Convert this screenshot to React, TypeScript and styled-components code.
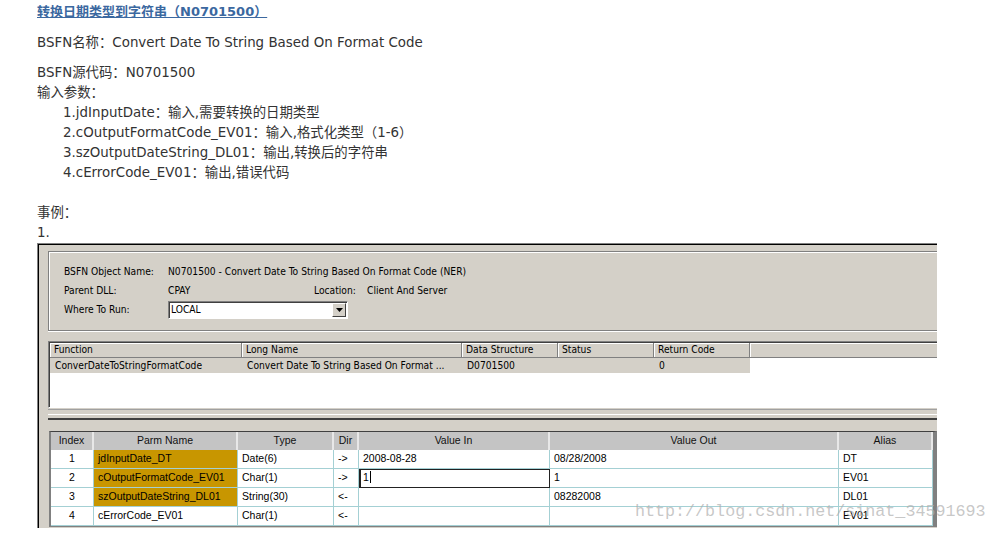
import React from "react";
import styled, { createGlobalStyle } from "styled-components";

const GlobalStyle = createGlobalStyle`
  html, body { margin: 0; padding: 0; background: #fff; }
  body { width: 995px; height: 540px; overflow: hidden; }
`;

const Page = styled.div`
  position: relative;
  padding: 2px 0 0 37px;
  font-family: "DejaVu Sans", "Noto Sans CJK SC", sans-serif;
  font-size: 13.4px;
  line-height: 20px;
  color: #333;
`;

const TitleLine = styled.div`
  margin-bottom: 11px;
  font-size: 13px;
`;

const TitleLink = styled.a`
  font-weight: bold;
  color: #3b68a0;
  text-decoration: underline;
`;

const Line = styled.div<{ $gap?: number; $indent?: number }>`
  margin-top: ${(p) => p.$gap ?? 0}px;
  padding-left: ${(p) => p.$indent ?? 0}px;
  white-space: nowrap;
`;

/* ---------- embedded window screenshot ---------- */

const Window = styled.div`
  width: 899px;
  height: 284px;
  background: #d4d0c8;
  border-top: 1px solid #808080;
  border-left: 1px solid #808080;
  box-shadow: inset 1px 1px 0 #000;
  display: flex;
  flex-direction: column;
  overflow: hidden;
  font-family: "DejaVu Sans Condensed", "Liberation Sans", sans-serif;
  font-size: 10.2px;
  color: #000;
`;

const UpperPane = styled.div`
  padding: 7px 0 0 10px;
  display: flex;
  flex-direction: column;
`;

const InfoGroup = styled.div`
  margin-right: -4px;
  height: 68px;
  border: 1px solid #808080;
  border-right: none;
  box-shadow: inset 1px 1px 0 #fff, 0 1px 0 #fff;
  padding: 10px 0 0 15px;
  box-sizing: content-box;
  display: grid;
  grid-template-columns: 104px 146px 53px auto;
  grid-auto-rows: 19px;
  align-items: center;
`;

const Label = styled.span<{ $span?: number }>`
  grid-column: span ${(p) => p.$span ?? 1};
  white-space: nowrap;
`;

const Combo = styled.div`
  grid-column: span 3;
  width: 176px;
  height: 16px;
  background: #fff;
  border: 1px solid;
  border-color: #808080 #fff #fff #808080;
  box-shadow: inset 1px 1px 0 #404040;
  display: flex;
  align-items: center;
  justify-content: space-between;
  padding-left: 2px;
  box-sizing: content-box;
`;

const ComboButton = styled.div`
  width: 14px;
  height: 14px;
  margin-right: 1px;
  background: #d4d0c8;
  border: 1px solid;
  border-color: #fff #404040 #404040 #fff;
  box-sizing: border-box;
  display: flex;
  align-items: center;
  justify-content: center;
`;

const ListView = styled.div`
  margin-top: 10px;
  margin-right: -4px;
  height: 64px;
  background: #fff;
  border: 1px solid;
  border-color: #808080 transparent #fff #808080;
  box-shadow: inset 1px 1px 0 #404040;
  padding: 1px 0 0 1px;
`;

const ListRow = styled.div`
  display: grid;
  grid-template-columns: 192px 220px 96px 96px 96px 1fr;
  height: 15px;
  align-items: stretch;
`;

const ListHead = styled.div`
  background: #d4d0c8;
  border-right: 1px solid #808080;
  border-bottom: 1px solid #808080;
  box-shadow: inset 1px 1px 0 #fff;
  padding-left: 4px;
  line-height: 14px;
  white-space: nowrap;
`;

const ListCell = styled.div<{ $selected?: boolean }>`
  background: ${(p) => (p.$selected ? "#d4d0c8" : "transparent")};
  padding-left: 5px;
  line-height: 15px;
  white-space: nowrap;
  overflow: hidden;
`;

const Splitter = styled.div`
  margin-top: 1px;
  height: 8px;
  border-top: 1px solid #a0a0a0;
  border-bottom: 2px solid #404040;
  box-shadow: inset 0 -3px 0 #d4d0c8, inset 0 -4px 0 #fff;
`;

const LowerPane = styled.div`
  flex: 1;
  padding: 11px 0 0 11px;
`;

const DataGrid = styled.div`
  display: grid;
  grid-template-columns: 43px 144px 96px 25px 191px 289px 94px;
  grid-template-rows: 18px repeat(4, 19px);
  width: max-content;
  border-top: 1px solid #404040;
  border-left: 2px solid #808080;
  border-right: 4px solid #808080;
  border-bottom: 1px solid #808080;
  font-family: "Liberation Sans", Arial, sans-serif;
  font-size: 10.5px;
`;

const GridHead = styled.div`
  background: #c4c4c4;
  border-right: 2px solid #e8e8e8;
  text-align: center;
  line-height: 17px;
  color: #111;
`;

const GridCell = styled.div<{ $gold?: boolean; $center?: boolean; $edit?: boolean }>`
  position: relative;
  background: ${(p) => (p.$gold ? "#c89600" : "#fff")};
  border-right: 1px solid #a4d0d4;
  border-bottom: 1px solid #a4d0d4;
  text-align: ${(p) => (p.$center ? "center" : "left")};
  padding-left: ${(p) => (p.$center ? 0 : 4)}px;
  line-height: 17px;
  white-space: nowrap;
  ${(p) =>
    p.$edit
      ? `border: 1px solid #222; border-left-width: 2px; line-height: 15px; padding-left: 2px;`
      : ""}
`;

const Caret = styled.span`
  display: inline-block;
  width: 1px;
  height: 12px;
  background: #000;
  vertical-align: -2px;
  margin-left: 1px;
`;

const Watermark = styled.div`
  position: absolute;
  left: 635px;
  top: 502px;
  font-family: "Liberation Mono", "Courier New", monospace;
  font-size: 16.7px;
  line-height: 20px;
  color: rgba(175, 175, 175, 0.7);
  white-space: nowrap;
  pointer-events: none;
`;

type Row = {
  idx: string;
  name: string;
  gold: boolean;
  type: string;
  dir: string;
  vin: string;
  vout: string;
  alias: string;
  edit?: boolean;
};

const rows: Row[] = [
  { idx: "1", name: "jdInputDate_DT", gold: true, type: "Date(6)", dir: "->", vin: "2008-08-28", vout: "08/28/2008", alias: "DT" },
  { idx: "2", name: "cOutputFormatCode_EV01", gold: true, type: "Char(1)", dir: "->", vin: "1", vout: "1", alias: "EV01", edit: true },
  { idx: "3", name: "szOutputDateString_DL01", gold: true, type: "String(30)", dir: "<-", vin: "", vout: "08282008", alias: "DL01" },
  { idx: "4", name: "cErrorCode_EV01", gold: false, type: "Char(1)", dir: "<-", vin: "", vout: "", alias: "EV01" },
];

const heads = ["Index", "Parm Name", "Type", "Dir", "Value In", "Value Out", "Alias"];

export default function App() {
  return (
    <Page>
      <GlobalStyle />
      <TitleLine>
        <TitleLink>转换日期类型到字符串（N0701500）</TitleLink>
      </TitleLine>
      <Line>BSFN名称：Convert Date To String Based On Format Code</Line>
      <Line $gap={10}>BSFN源代码：N0701500</Line>
      <Line>输入参数：</Line>
      <Line $indent={26}>1.jdInputDate：输入,需要转换的日期类型</Line>
      <Line $indent={26}>2.cOutputFormatCode_EV01：输入,格式化类型（1-6）</Line>
      <Line $indent={26}>3.szOutputDateString_DL01：输出,转换后的字符串</Line>
      <Line $indent={26}>4.cErrorCode_EV01：输出,错误代码</Line>
      <Line $gap={20}>事例：</Line>
      <Line>1.</Line>

      <Window>
        <UpperPane>
          <InfoGroup>
            <Label>BSFN Object Name:</Label>
            <Label $span={3}>N0701500 - Convert Date To String Based On Format Code (NER)</Label>
            <Label>Parent DLL:</Label>
            <Label>CPAY</Label>
            <Label>Location:</Label>
            <Label>Client And Server</Label>
            <Label>Where To Run:</Label>
            <Combo>
              <span>LOCAL</span>
              <ComboButton>
                <svg width="7" height="4" viewBox="0 0 7 4">
                  <path d="M0 0h7L3.5 4z" fill="#000" />
                </svg>
              </ComboButton>
            </Combo>
          </InfoGroup>
          <ListView>
            <ListRow>
              <ListHead>Function</ListHead>
              <ListHead>Long Name</ListHead>
              <ListHead>Data Structure</ListHead>
              <ListHead>Status</ListHead>
              <ListHead>Return Code</ListHead>
              <ListHead />
            </ListRow>
            <ListRow>
              <ListCell $selected>ConverDateToStringFormatCode</ListCell>
              <ListCell $selected>Convert Date To String Based On Format ...</ListCell>
              <ListCell $selected>D0701500</ListCell>
              <ListCell $selected />
              <ListCell $selected>0</ListCell>
              <ListCell />
            </ListRow>
          </ListView>
          <Splitter />
        </UpperPane>
        <LowerPane>
          <DataGrid>
            {heads.map((h) => (
              <GridHead key={h}>{h}</GridHead>
            ))}
            {rows.map((r) => (
              <React.Fragment key={r.idx}>
                <GridCell $center>{r.idx}</GridCell>
                <GridCell $gold={r.gold}>{r.name}</GridCell>
                <GridCell>{r.type}</GridCell>
                <GridCell>{r.dir}</GridCell>
                <GridCell $edit={r.edit}>
                  {r.vin}
                  {r.edit && <Caret />}
                </GridCell>
                <GridCell>{r.vout}</GridCell>
                <GridCell>{r.alias}</GridCell>
              </React.Fragment>
            ))}
          </DataGrid>
        </LowerPane>
      </Window>
      <Watermark>http://blog.csdn.net/sinat_34591693</Watermark>
    </Page>
  );
}
